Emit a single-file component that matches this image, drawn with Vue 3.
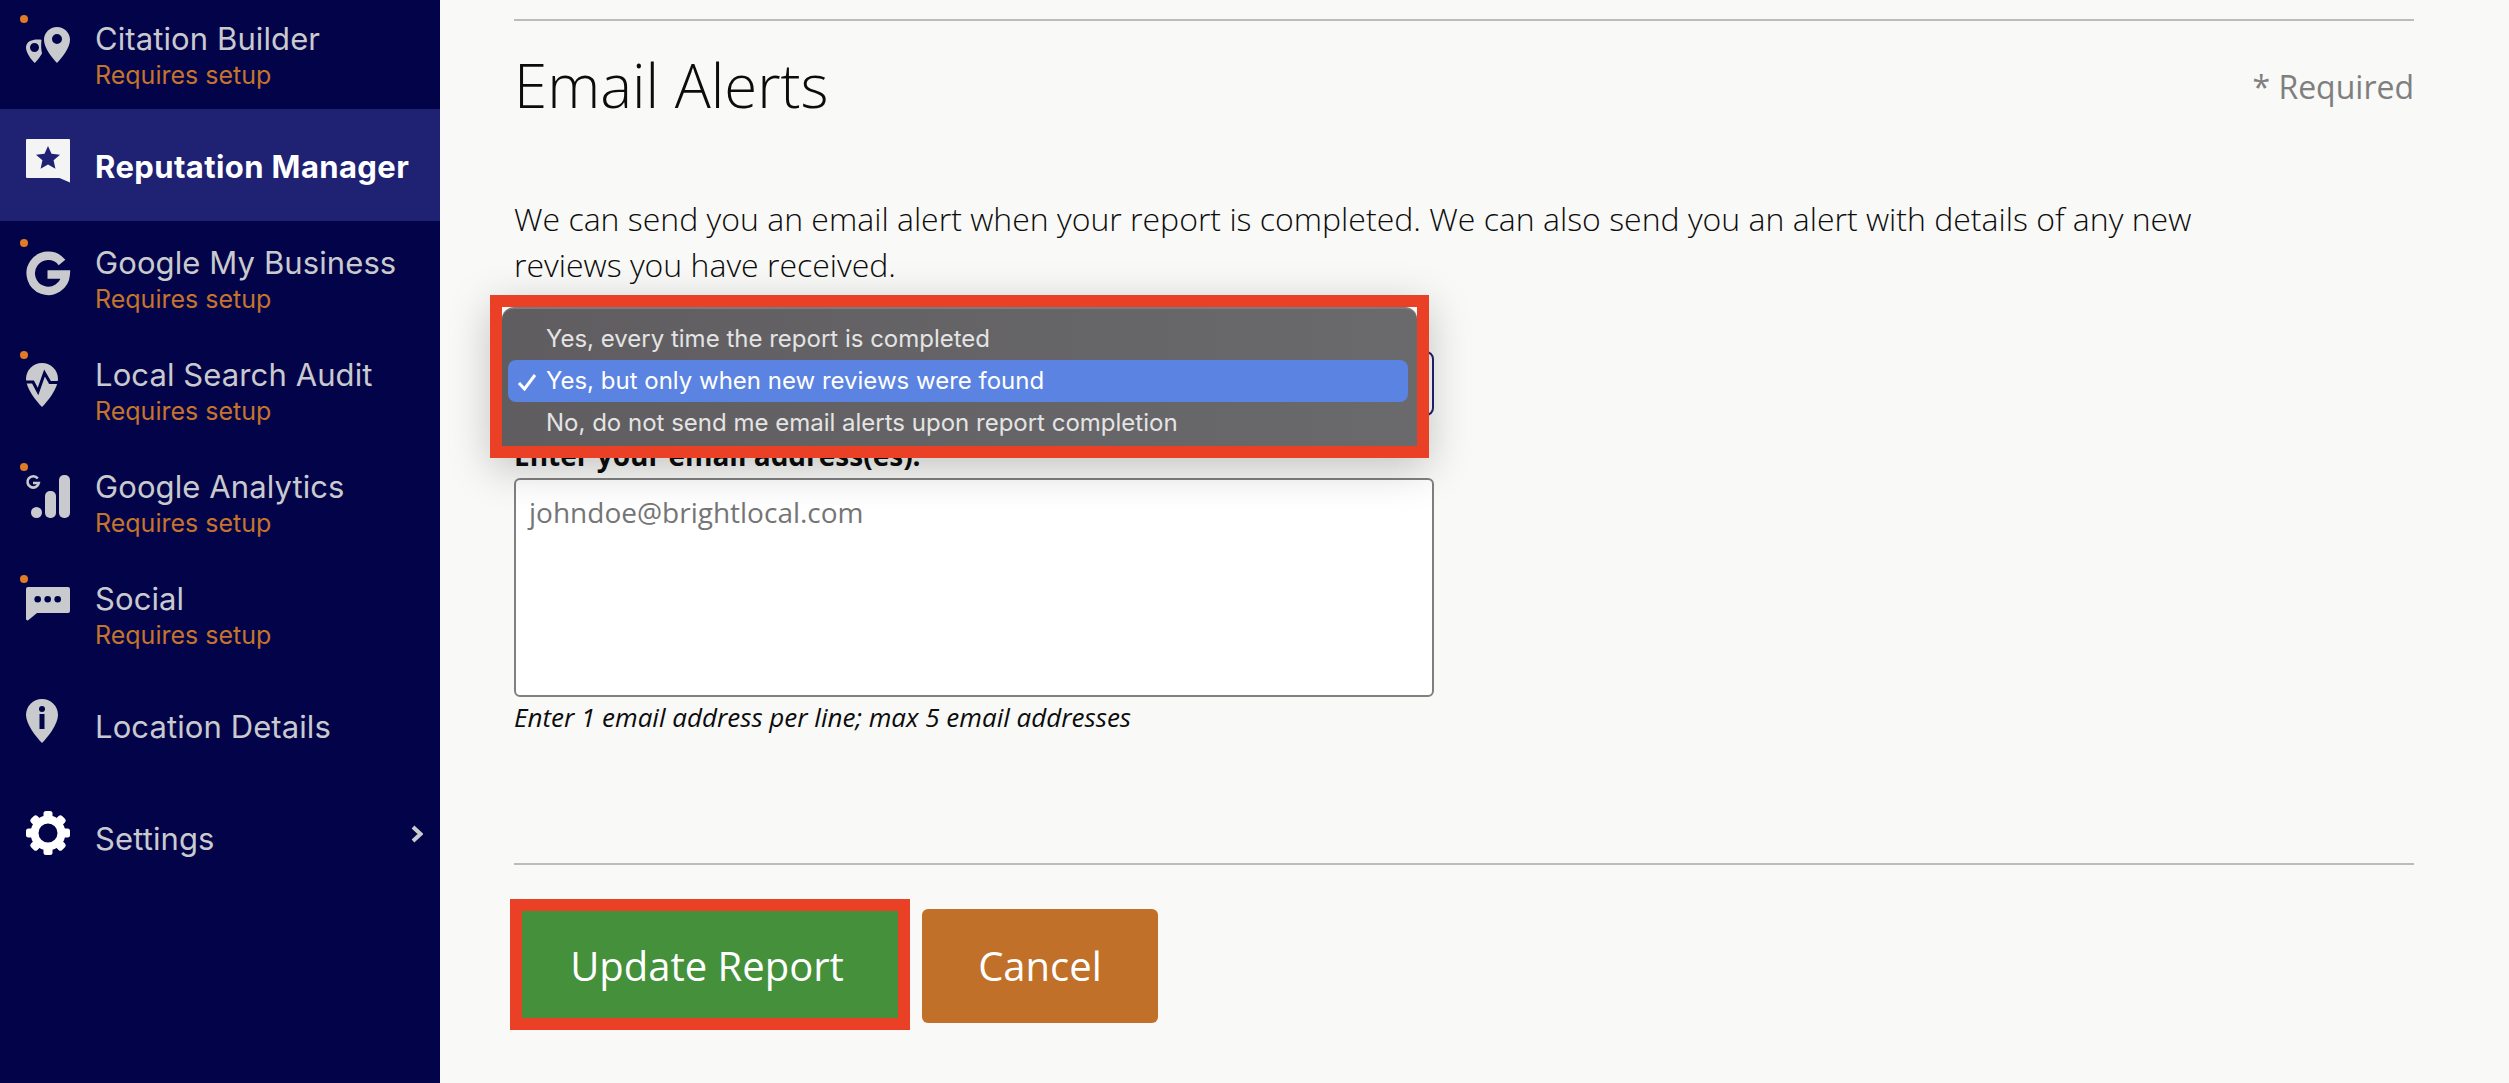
<script setup>
const items = [
  { key: 'citation', label: 'Citation Builder', setup: true },
  { key: 'reputation', label: 'Reputation Manager', active: true },
  { key: 'google', label: 'Google My Business', setup: true },
  { key: 'audit', label: 'Local Search Audit', setup: true },
  { key: 'analytics', label: 'Google Analytics', setup: true },
  { key: 'social', label: 'Social', setup: true },
  { key: 'location', label: 'Location Details' },
  { key: 'settings', label: 'Settings', chevron: true }
]
const teeth = [0, 45, 90, 135, 180, 225, 270, 315]
const options = [
  { text: 'Yes, every time the report is completed' },
  { text: 'Yes, but only when new reviews were found', selected: true },
  { text: 'No, do not send me email alerts upon report completion' }
]
</script>

<template>
  <div class="page">
    <nav class="sidebar">
      <a
        v-for="item in items"
        :key="item.key"
        class="row"
        :class="{ active: item.active }"
      >
        <span v-if="item.setup" class="dot"></span>
        <svg class="icon" viewBox="0 0 44 44" width="44" height="44">
          <g v-if="item.key === 'citation'" fill="#c9cacd" fill-rule="evenodd">
            <path d="M31 0C23.800 0 18 5.700 18 12.800C18 21 26.500 31.500 31 36C35.500 31.500 44 21 44 12.800C44 5.700 38.200 0 31 0ZM31 7A5 5 0 1 1 31 17A5 5 0 1 1 31 7Z" />
            <path d="M15.500 12.800C11 12 7 12.500 4 14C1 15.500 0 18 0 20.500C0 25.500 5 32.500 8.700 36C11.200 33.500 14 30 16 26.500C15 22 15 17.500 15.500 12.800ZM8.500 16A4.500 4.500 0 1 1 8.500 25A4.500 4.500 0 1 1 8.500 16Z" />
          </g>
          <g v-else-if="item.key === 'reputation'">
            <path fill="#f4f4f4" d="M1 0H43A1 1 0 0 1 44 1V43.500L33.500 39H1A1 1 0 0 1 0 38V1A1 1 0 0 1 1 0Z" />
            <path fill="#1f2272" d="M22 7L25.500 14.800L34 15.700L27.600 21.300L29.400 29.800L22 25.400L14.600 29.800L16.400 21.300L10 15.700L18.500 14.800Z" />
          </g>
          <path
            v-else-if="item.key === 'google'"
            fill="none"
            stroke="#c9cacd"
            stroke-width="8.500"
            d="M36 11.500A17.500 17.500 0 1 0 39.700 23.500H21.500"
          />
          <g v-else-if="item.key === 'audit'">
            <path fill="#c9cacd" d="M16 0C7 0 0 7 0 16C0 25 10 38 16 44C22 38 32 25 32 16C32 7 25 0 16 0Z" />
            <path fill="none" stroke="#03034a" stroke-width="3" d="M-1 19H7L12 28.500L18.500 10L24 19.500H33" />
          </g>
          <g v-else-if="item.key === 'analytics'" fill="#c9cacd">
            <path fill="none" stroke="#c9cacd" stroke-width="2.600" d="M11.800 3.500A5.700 5.700 0 1 0 12.800 8H7" />
            <circle cx="10.500" cy="37.500" r="5.500" />
            <rect x="19" y="16" width="11" height="27" rx="5" />
            <rect x="33" y="0" width="11" height="43" rx="5" />
          </g>
          <g v-else-if="item.key === 'social'">
            <path fill="#c9cacd" d="M2 0H42A2 2 0 0 1 44 2V24A2 2 0 0 1 42 26H11L2.500 33A1.500 1.500 0 0 1 0 32V2A2 2 0 0 1 2 0Z" />
            <circle cx="11.700" cy="12.300" r="3.300" fill="#03034a" />
            <circle cx="21.700" cy="12.300" r="3.300" fill="#03034a" />
            <circle cx="31.700" cy="12.300" r="3.300" fill="#03034a" />
          </g>
          <g v-else-if="item.key === 'location'">
            <path fill="#c9cacd" d="M16 0C7 0 0 7 0 16C0 25 10 38 16 44C22 38 32 25 32 16C32 7 25 0 16 0Z" />
            <circle cx="16" cy="10" r="3" fill="#03034a" />
            <rect x="13.500" y="15" width="5" height="15" fill="#03034a" />
          </g>
          <g v-else-if="item.key === 'settings'">
            <circle cx="22" cy="22" r="13.500" fill="none" stroke="#fff" stroke-width="8" />
            <rect
              v-for="angle in teeth"
              :key="angle"
              x="17.500"
              y="0"
              width="9"
              height="9"
              rx="2.500"
              fill="#fff"
              :transform="`rotate(${angle} 22 22)`"
            />
          </g>
        </svg>
        <span class="text" :class="{ single: !item.setup }">
          <span class="label">{{ item.label }}</span>
          <span v-if="item.setup" class="sub">Requires setup</span>
        </span>
        <svg v-if="item.chevron" class="chevron" viewBox="0 0 12 18" width="12" height="18">
          <path d="M2 2L9.500 9L2 16" fill="none" stroke="#c9cacd" stroke-width="4" />
        </svg>
      </a>
    </nav>

    <main class="main">
      <hr class="rule first" />
      <header class="head">
        <h1 class="title">Email Alerts</h1>
        <span class="required">* Required</span>
      </header>
      <p class="intro">
        We can send you an email alert when your report is completed. We can also send you an alert with details of any new reviews you have received.
      </p>

      <div class="select"></div>
      <label class="field-label">Enter your email address(es):</label>
      <textarea class="emails" placeholder="johndoe@brightlocal.com" readonly></textarea>
      <p class="hint">Enter 1 email address per line; max 5 email addresses</p>

      <hr class="rule second" />
      <div class="actions">
        <button class="btn update">
          Update Report
          <span class="mark"></span>
        </button>
        <button class="btn cancel">Cancel</button>
      </div>

      <div class="menu-frame">
        <ul class="menu">
          <li
            v-for="option in options"
            :key="option.text"
            class="option"
            :class="{ selected: option.selected }"
          >
            <svg v-if="option.selected" class="check" viewBox="0 0 20 18" width="20" height="18">
              <path d="M2 10L7.500 16L18 2" fill="none" stroke="#fff" stroke-width="3" />
            </svg>
            <span class="option-text">{{ option.text }}</span>
          </li>
        </ul>
      </div>
    </main>
  </div>
</template>

<style scoped>
.page {
  display: flex;
  height: 1083px;
  overflow: hidden;
  background: #f9f9f7;
}

.sidebar {
  width: 440px;
  flex: none;
  background: #03034a;
  font-family: Inter, "Noto Sans", sans-serif;
}

.row {
  position: relative;
  display: flex;
  height: 112px;
  padding-left: 26px;
  color: #c9cacd;
}

.row:first-child {
  margin-top: -3px;
}

.row.active {
  background: #1f2272;
  color: #fff;
}

.dot {
  position: absolute;
  left: 20px;
  top: 18px;
  width: 8px;
  height: 8px;
  border-radius: 50%;
  background: #e07b25;
}

.icon {
  flex: none;
  margin-top: 30px;
  overflow: visible;
}

.text {
  display: flex;
  flex-direction: column;
  margin-left: 25px;
  padding-top: 23px;
}

.text.single {
  padding-top: 39px;
}

.label {
  font-size: 31px;
  line-height: 37px;
  letter-spacing: 0.1px;
  white-space: nowrap;
}

.active .label {
  font-weight: 700;
  letter-spacing: 0.4px;
}

.sub {
  font-size: 25px;
  line-height: 37px;
  color: #c4742b;
  white-space: nowrap;
}

.chevron {
  position: absolute;
  left: 411px;
  top: 44px;
}

.main {
  position: relative;
  flex: 1;
  padding: 0 95px 0 74px;
  font-family: "Open Sans", sans-serif;
  color: #0c0c0c;
}

.rule {
  height: 2px;
  margin: 0;
  border: 0;
  background: #bdbcb8;
}

.rule.first {
  margin-top: 19px;
}

.rule.second {
  margin-top: 128px;
}

.head {
  display: flex;
  justify-content: space-between;
  margin-top: 29px;
}

.title {
  margin: 0;
  font-size: 60px;
  line-height: 70px;
  font-weight: 300;
}

.required {
  padding-top: 2px;
  font-size: 32px;
  line-height: 70px;
  color: #7f7f7f;
}

.intro {
  width: 1780px;
  margin: 74px 0 0;
  font-size: 32px;
  line-height: 46px;
  font-weight: 300;
}

.select {
  width: 920px;
  height: 65px;
  margin-top: 63px;
  box-sizing: border-box;
  border: 2px solid #1f2272;
  border-radius: 8px;
  background: #fff;
}

.field-label {
  display: block;
  margin-top: 21px;
  font-size: 28px;
  line-height: 36px;
  font-weight: 700;
}

.emails {
  display: block;
  box-sizing: border-box;
  width: 920px;
  height: 219px;
  margin-top: 5px;
  padding: 13px 13px;
  border: 2px solid #808080;
  border-radius: 6px;
  background: #fff;
  font-family: "Open Sans", sans-serif;
  font-size: 28px;
  line-height: 38px;
  resize: none;
  outline: none;
}

.emails::placeholder {
  color: #757575;
}

.hint {
  margin: 2px 0 0;
  font-size: 26px;
  line-height: 36px;
  font-style: italic;
}

.actions {
  display: flex;
  gap: 22px;
  margin-top: 44px;
}

.btn {
  position: relative;
  height: 114px;
  padding-bottom: 3px;
  border: 0;
  border-radius: 6px;
  color: #fff;
  font-family: "Open Sans", sans-serif;
  font-size: 40px;
}

.update {
  width: 386px;
  background: #44903b;
}

.cancel {
  width: 236px;
  background: #c07029;
}

.mark {
  position: absolute;
  left: -4px;
  right: -10px;
  top: -10px;
  bottom: -7px;
  border: 12px solid #ea4025;
}

.menu-frame {
  position: absolute;
  left: 50px;
  top: 295px;
  width: 939px;
  height: 163px;
  box-sizing: border-box;
  border: 12px solid #ea4025;
  box-shadow: 0 10px 40px rgba(0, 0, 0, 0.22);
}

.menu {
  height: 100%;
  margin: 0;
  padding: 9px 9px 0 6px;
  box-sizing: border-box;
  list-style: none;
  border-top: 2px solid #7b7a7c;
  border-radius: 12px 12px 0 0;
  background: linear-gradient(90deg, #5f5d60, #6a696b);
  font-family: Inter, "Noto Sans", sans-serif;
  font-size: 24px;
  color: #e4e4e4;
}

.option {
  position: relative;
  height: 42px;
  padding-left: 38px;
  line-height: 42px;
  border-radius: 8px;
  white-space: nowrap;
}

.option.selected {
  background: #5a83e2;
  color: #fff;
}

.check {
  position: absolute;
  left: 9px;
  top: 13px;
}
</style>
